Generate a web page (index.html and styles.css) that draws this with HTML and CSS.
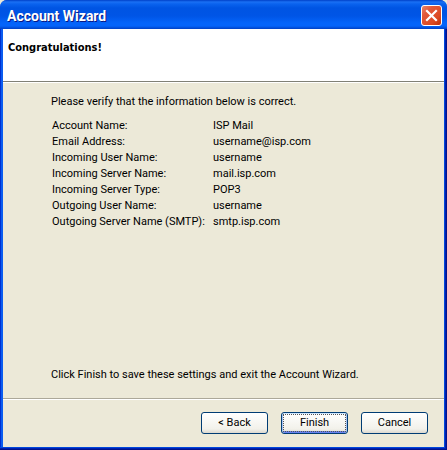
FILE: index.html
```html
<!DOCTYPE html>
<html lang="en">
<head>
<meta charset="utf-8">
<title>Account Wizard</title>
<link rel="stylesheet" href="styles.css">
</head>
<body>
<main class="window">
  <header class="titlebar">
    <h1 class="title">Account Wizard</h1>
    <button class="close" type="button" aria-label="Close">
      <svg viewBox="0 0 21 21" width="21" height="21" aria-hidden="true">
        <defs>
          <linearGradient id="red" x1="0" y1="0" x2="1" y2="1">
            <stop offset="0" stop-color="#e88a70"/>
            <stop offset=".3" stop-color="#e2593a"/>
            <stop offset=".7" stop-color="#dc4a22"/>
            <stop offset="1" stop-color="#b82c08"/>
          </linearGradient>
        </defs>
        <rect x=".5" y=".5" width="20" height="20" rx="2.5" fill="url(#red)" stroke="#fff"/>
        <path d="M6 6l9 9M15 6l-9 9" stroke="#fff" stroke-width="2.2" stroke-linecap="square"/>
      </svg>
    </button>
  </header>
  <div class="client">
    <div class="banner"><h2 class="heading">Congratulations!</h2></div>
    <section class="content">
      <p class="note">Please verify that the information below is correct.</p>
      <table class="details">
        <tbody>
          <tr><th scope="row">Account Name:</th><td>ISP Mail</td></tr>
          <tr><th scope="row">Email Address:</th><td>username@isp.com</td></tr>
          <tr><th scope="row">Incoming User Name:</th><td>username</td></tr>
          <tr><th scope="row">Incoming Server Name:</th><td>mail.isp.com</td></tr>
          <tr><th scope="row">Incoming Server Type:</th><td>POP3</td></tr>
          <tr><th scope="row">Outgoing User Name:</th><td>username</td></tr>
          <tr><th scope="row">Outgoing Server Name (SMTP):</th><td>smtp.isp.com</td></tr>
        </tbody>
      </table>
      <p class="note closing">Click Finish to save these settings and exit the Account Wizard.</p>
    </section>
    <footer class="actions">
      <button class="button" type="button">&lt; Back</button>
      <button class="button primary" type="button">Finish</button>
      <button class="button" type="button">Cancel</button>
    </footer>
  </div>
</main>
</body>
</html>
```
FILE: styles.css
```css
* { box-sizing: border-box; }

body {
  margin: 0;
  background: #ece9d8;
  color: #000;
  font: 11px/16px Tahoma, Roboto, sans-serif;
}

h1, h2, p { margin: 0; }

.window {
  display: flex;
  flex-direction: column;
  min-height: 100vh;
  border-radius: 7px 7px 0 0;
  overflow: hidden;
  background: #0048e0;
}

.titlebar {
  display: flex;
  align-items: center;
  justify-content: space-between;
  height: 29px;
  padding: 2px 5px 0 7px;
  background: linear-gradient(#0040c8 0, #1a70f4 2px, #0a62ee 4px, #0054e3 8px, #0055e6 16px, #0464fa 23px, #0464fa 26px, #0040c4 29px);
}

.title {
  color: #fff;
  font: bold 14px/18px "Trebuchet MS", Roboto, sans-serif;
  text-shadow: 1px 1px #0a1883;
}

.close {
  width: 21px;
  height: 21px;
  padding: 0;
  border: 0;
  background: none;
}

.close svg { display: block; }

.client {
  display: flex;
  flex: 1;
  flex-direction: column;
  padding: 0 3px 3px;
  background: #ece9d8;
  box-shadow:
    inset -1px -1px #00138c,
    inset -2px -2px #0020b0,
    inset 0 -3px #0048dc,
    inset -3px 0 #0048dc,
    inset 1px 0 #0030d0,
    inset 3px 0 #0a5cf0;
}

.banner {
  height: 53px;
  padding: 11px 5px;
  border-bottom: 1px solid #808076;
  background: #fff;
}

.heading { font: bold 11px/16px Tahoma, "DejaVu Sans Condensed", sans-serif; }

.content {
  display: flex;
  flex: 1;
  flex-direction: column;
  padding: 11px 48px 15px;
  border-top: 1px solid #fff;
}

.details {
  margin-top: 8px;
  border-collapse: collapse;
}

.details th, .details td {
  height: 16px;
  padding: 0 1px;
  font-weight: normal;
  text-align: left;
  white-space: nowrap;
}

.details th { width: 161px; }

.closing { margin-top: auto; }

.actions {
  display: flex;
  justify-content: flex-end;
  gap: 13px;
  padding: 13px 16px;
  border-top: 1px solid #aca899;
  box-shadow: inset 0 1px #fff;
}

.button {
  width: 67px;
  height: 22px;
  padding: 0;
  border: 1px solid #003c74;
  border-radius: 3px;
  background: linear-gradient(#fff, #f2f1ea 80%, #dcd8cf);
  color: #000;
  font: inherit;
}

.primary {
  outline: 1px dotted #555;
  outline-offset: -3px;
  box-shadow: inset 0 1px #cee7ff, inset 1px 0 #a8c4f4, inset -1px 0 #a8c4f4, inset 0 -2px #6982ee;
}
```
